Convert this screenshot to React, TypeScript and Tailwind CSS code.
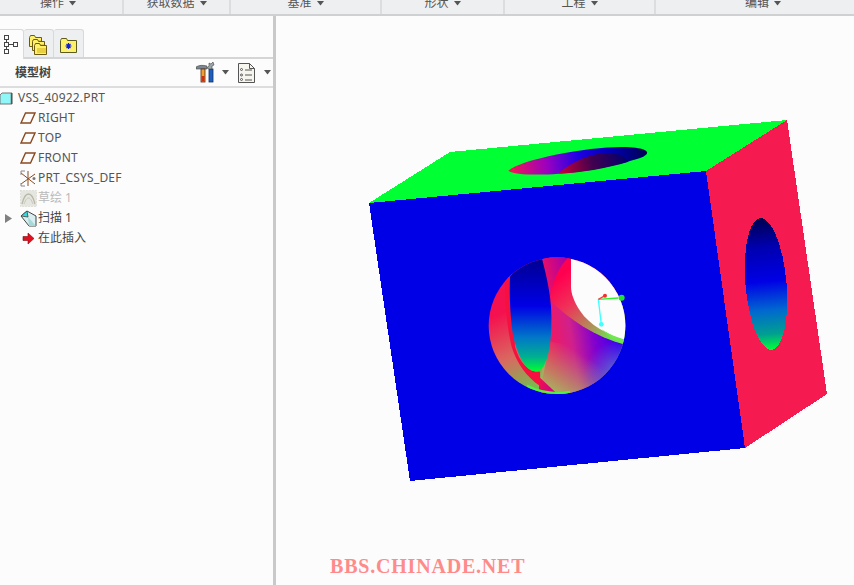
import React from "react";

const menus = [
  { label: "操作", w: "w-[124px] pr-[6px]" },
  { label: "获取数据", w: "w-[107px]" },
  { label: "基准", w: "w-[151px]" },
  { label: "形状", w: "w-[123px]" },
  { label: "工程", w: "w-[151px]" },
  { label: "编辑", w: "flex-1 pl-[16px]" },
];

const Caret = ({ color = "#555" }: { color?: string }) => (
  <svg width="7" height="5" viewBox="0 0 7 5" className="shrink-0">
    <path d="M0 0h7L3.5 4.5z" fill={color} />
  </svg>
);

const PlaneIcon = () => (
  <svg width="16" height="12" viewBox="0 0 16 12" className="-ml-[1px]">
    <path d="M5.500 1h9.500L10.500 11H1z" fill="none" stroke="#8b4a20" strokeWidth="1.400" />
  </svg>
);

const PartIcon = () => (
  <svg width="13" height="13" viewBox="0 0 13 13">
    <path d="M0 3l2-2h10v11H0z" fill="#8ff7f7" stroke="#777" strokeWidth="1" />
    <path d="M11.5 1v11" stroke="#555" strokeWidth="1.5" />
  </svg>
);

const CsysIcon = () => (
  <svg width="17" height="17" viewBox="0 0 17 17" fill="none">
    <path d="M8 1v15M1 3l14 11M1 14l14-10" stroke="#8b4a20" strokeWidth="1" />
    <path d="M1 1l4 0M1 1v4M1 16h4M1 16v-3" stroke="#888" strokeWidth="1" />
    <circle cx="14" cy="8.500" r="1.500" fill="#777" />
  </svg>
);

const SketchIcon = () => (
  <svg width="17" height="17" viewBox="0 0 17 17" fill="none">
    <rect x="0.500" y="0.500" width="16" height="16" fill="#e6e6e0" stroke="#d0d0c8" strokeDasharray="1 2" />
    <path d="M2 14C4 6 7 4 8.500 4S13 6 15 14" stroke="#b8b8a8" strokeWidth="1.300" />
    <path d="M4 14C6 9 7 8 8.500 8S11 9 13 14" stroke="#c8c8bc" strokeWidth="1" />
  </svg>
);

const SweepIcon = () => (
  <svg width="18" height="17" viewBox="0 0 18 17">
    <path d="M1 6l6-5 9 5v10H9z" fill="#d9eef0" stroke="#444" strokeWidth="1" />
    <path d="M1 6l6-5 1 6z" fill="#35d8d8" stroke="#444" strokeWidth="0.800" />
    <path d="M8 7l8 9H9z" fill="#a8d8d8" />
  </svg>
);

const InsertIcon = () => (
  <svg width="13" height="13" viewBox="0 0 13 13">
    <path d="M1 4.500h5V1l6 5.500-6 5.500V8.500H1z" fill="#e01020" stroke="#701010" strokeWidth="0.600" />
  </svg>
);

const TreeTabIcon = () => (
  <svg width="15" height="20" viewBox="0 0 15 20" fill="none" stroke="#444" strokeWidth="1">
    <rect x="0.500" y="0.500" width="4" height="4" />
    <rect x="0.500" y="7.500" width="4" height="4" />
    <rect x="0.500" y="14.500" width="4" height="4" />
    <rect x="9.500" y="7.500" width="4" height="4" />
    <path d="M2.500 5v2M2.500 12v2M5 9.500h4" />
  </svg>
);

const Folder = ({ x, y }: { x: number; y: number }) => (
  <g transform={`translate(${x} ${y})`}>
    <path d="M0.500 2.500l1-2h4l1 2h6v9h-12z" fill="#fff06a" stroke="#6b5a10" strokeWidth="1" />
    <path d="M3 5h9v5H3z" fill="#e8d040" />
  </g>
);

const FoldersTabIcon = () => (
  <svg width="19" height="20" viewBox="0 0 19 20">
    <Folder x={0} y={0} />
    <Folder x={3} y={4} />
    <Folder x={5} y={8} />
  </svg>
);

const StarFolderIcon = () => (
  <svg width="17" height="15" viewBox="0 0 17 15">
    <path d="M0.500 2.500l1-2h5l1 2h9v12h-16z" fill="#fff06a" stroke="#5b5a20" strokeWidth="1" />
    <path d="M8.500 5v6M5.500 8h6M6.500 6l4 4M10.500 6l-4 4" stroke="#1020d0" strokeWidth="1.200" />
  </svg>
);

const ToolsIcon = () => (
  <svg width="20" height="21" viewBox="0 0 20 21">
    <path d="M0 5c3-2 7-2 11-1v3H0z" fill="#7b8790" stroke="#444" strokeWidth="0.600" />
    <rect x="5" y="7" width="4" height="13" fill="#f0a030" stroke="#5a2a10" strokeWidth="0.800" />
    <rect x="5.500" y="14" width="3" height="5.500" fill="#d03010" />
    <rect x="13" y="7" width="4" height="13" fill="#1d5fc0" stroke="#153060" strokeWidth="0.800" />
    <path d="M11 6l2-2V1l2 1 2-2 1 3-2 1v3h-3z" fill="#9aa4aa" stroke="#444" strokeWidth="0.600" />
  </svg>
);

const ListDocIcon = () => (
  <svg width="17" height="20" viewBox="0 0 17 20" fill="none" stroke="#555" strokeWidth="1">
    <path d="M0.500 0.500h11l5 5v14H0.500z" fill="#f6f5ee" />
    <path d="M11.500 0.500v5h5" />
    <path d="M7 7h7M7 12h7M7 17h7" />
    <circle cx="3.500" cy="6.500" r="1" />
    <circle cx="3.500" cy="12" r="1" />
    <circle cx="3.500" cy="16.500" r="1" />
  </svg>
);

const rows: { icon: React.ReactNode; label: string; color?: string; indent?: boolean; expand?: boolean; latin?: boolean }[] = [
  { icon: <PartIcon />, label: "VSS_40922.PRT", latin: true },
  { icon: <PlaneIcon />, label: "RIGHT", indent: true, latin: true },
  { icon: <PlaneIcon />, label: "TOP", indent: true, latin: true },
  { icon: <PlaneIcon />, label: "FRONT", indent: true, latin: true },
  { icon: <CsysIcon />, label: "PRT_CSYS_DEF", indent: true, latin: true },
  { icon: <SketchIcon />, label: "草绘 1", indent: true, color: "text-[#b9b9b9]" },
  { icon: <SweepIcon />, label: "扫描 1", indent: true, expand: true, color: "text-[#444]" },
  { icon: <InsertIcon />, label: "在此插入", indent: true, color: "text-[#444]" },
];

const Model = () => (
  <svg viewBox="276 16 578 569" className="h-[569px] flex-1">
    <defs>
      <linearGradient id="rightHole" gradientUnits="userSpaceOnUse" x1="0" y1="218" x2="0" y2="350">
        <stop offset="0" stopColor="#000050" />
        <stop offset="0.22" stopColor="#0000b0" />
        <stop offset="0.48" stopColor="#0000e6" />
        <stop offset="0.7" stopColor="#0068d0" />
        <stop offset="0.88" stopColor="#00a090" />
        <stop offset="1" stopColor="#00ff38" />
      </linearGradient>
      <linearGradient id="topHole" gradientUnits="userSpaceOnUse" x1="55" y1="120" x2="473" y2="70">
        <stop offset="0" stopColor="#f5184f" />
        <stop offset="0.28" stopColor="#9a00c0" />
        <stop offset="0.5" stopColor="#2000e6" />
        <stop offset="0.75" stopColor="#0000b0" />
        <stop offset="1" stopColor="#000050" />
      </linearGradient>
      <linearGradient id="topInner" gradientUnits="userSpaceOnUse" x1="205" y1="130" x2="415" y2="75">
        <stop offset="0" stopColor="#d00038" />
        <stop offset="0.5" stopColor="#400050" />
        <stop offset="1" stopColor="#000070" />
      </linearGradient>
      <linearGradient id="sphereLeft" gradientUnits="userSpaceOnUse" x1="90" y1="220" x2="190" y2="450">
        <stop offset="0" stopColor="#f5104f" />
        <stop offset="0.55" stopColor="#d86a60" />
        <stop offset="1" stopColor="#70c050" />
      </linearGradient>
      <linearGradient id="sphereRight" gradientUnits="userSpaceOnUse" x1="235" y1="320" x2="440" y2="290">
        <stop offset="0" stopColor="#f5185a" />
        <stop offset="0.35" stopColor="#d0208c" />
        <stop offset="0.68" stopColor="#8000d0" />
        <stop offset="1" stopColor="#3a00ee" />
      </linearGradient>
      <linearGradient id="sphereBottom" gradientUnits="userSpaceOnUse" x1="340" y1="345" x2="265" y2="465">
        <stop offset="0" stopColor="#b0a868" stopOpacity="0" />
        <stop offset="1" stopColor="#a8b060" stopOpacity="1" />
      </linearGradient>
      <radialGradient id="sphereBlue" gradientUnits="userSpaceOnUse" cx="450" cy="410" r="110">
        <stop offset="0" stopColor="#6a80c8" stopOpacity="1" />
        <stop offset="1" stopColor="#5070d8" stopOpacity="0" />
      </radialGradient>
      <linearGradient id="sphereBand" gradientUnits="userSpaceOnUse" x1="270" y1="110" x2="420" y2="290">
        <stop offset="0" stopColor="#ff0050" />
        <stop offset="0.35" stopColor="#f03058" />
        <stop offset="0.75" stopColor="#b09058" />
        <stop offset="1" stopColor="#70e050" />
      </linearGradient>
      <linearGradient id="sphereHole" gradientUnits="userSpaceOnUse" x1="0" y1="55" x2="0" y2="395">
        <stop offset="0" stopColor="#000090" />
        <stop offset="0.42" stopColor="#0000e6" />
        <stop offset="0.7" stopColor="#0078c8" />
        <stop offset="0.87" stopColor="#00b090" />
        <stop offset="1" stopColor="#00ff30" />
      </linearGradient>
      <linearGradient id="sphereSliver" gradientUnits="userSpaceOnUse" x1="215" y1="100" x2="295" y2="80">
        <stop offset="0" stopColor="#f01060" />
        <stop offset="1" stopColor="#a800a8" />
      </linearGradient>
      <linearGradient id="sphereBottomSliver" gradientUnits="userSpaceOnUse" x1="205" y1="430" x2="265" y2="450">
        <stop offset="0" stopColor="#f01050" />
        <stop offset="1" stopColor="#c00098" />
      </linearGradient>
      <clipPath id="sphere">
        <circle cx="261" cy="257" r="205" />
      </clipPath>
    </defs>

    <g shapeRendering="crispEdges">
      <polygon points="369,203 450,152 787,120 706,171" fill="#00ff33" />
      <polygon points="706,171 787,120 827,394 745,448" fill="#f51a50" />
      <polygon points="369,203 706,171 745,448 410,481" fill="#0000e6" />
      <ellipse cx="766" cy="284" rx="20.500" ry="66" transform="rotate(-5 766 284)" fill="url(#rightHole)" />
    </g>

    {/* hole in the top face, drawn at 3x */}
    <g transform="translate(490 130) scale(0.3333)">
      <path d="M55 122C100 85 320 45 420 52C470 55 485 68 460 80C400 102 300 125 205 131C150 136 70 135 55 122Z" fill="url(#topHole)" />
      <path d="M205 131C250 90 310 68 360 70C395 72 412 85 415 95C350 115 270 128 205 131Z" fill="url(#topInner)" />
    </g>

    {/* hole in the front face, drawn at 3x */}
    <g transform="translate(470 240) scale(0.3333)">
      <g clipPath="url(#sphere)">
        <rect x="50" y="40" width="430" height="440" fill="url(#sphereLeft)" />
        <path d="M240 180C300 240 380 290 475 315V480H205L235 330Z" fill="url(#sphereRight)" />
        <path d="M225 300C300 320 400 330 475 330V480H205Z" fill="url(#sphereBottom)" />
        <path d="M300 270H480V480H300Z" fill="url(#sphereBlue)" />
        <path d="M235 170C245 115 275 75 303 45H480V318C380 295 300 240 240 180Z" fill="url(#sphereBand)" />
        <path d="M303 45H480V303C420 288 360 258 330 212C312 185 303 160 303 140Z" fill="#fcfcfc" />
        <path d="M395 268C420 285 445 296 470 303V314C445 306 420 292 395 268Z" fill="#6fe850" />
        <path d="M212 45H303C270 75 245 120 240 185C232 140 220 90 212 45Z" fill="url(#sphereSliver)" />
        <path d="M105 120L125 90L135 320C150 370 175 395 210 395V438C170 410 140 370 125 320C110 260 105 180 105 120Z" fill="#f5103f" />
        <path d="M120 110C140 85 180 60 215 52C230 110 248 180 244 260C242 340 225 395 198 395C165 395 140 340 128 280C120 220 118 160 120 110Z" fill="url(#sphereHole)" />
        <path d="M207 410L265 465H207Z" fill="url(#sphereBottomSliver)" />
        <path d="M170 440A205 205 0 0 0 300 458" fill="none" stroke="#55f040" strokeWidth="12" />
      </g>
      <path d="M385 178L445 174" stroke="#30f030" strokeWidth="4" />
      <path d="M385 178L394 253" stroke="#40ffff" strokeWidth="4" />
      <path d="M385 178L405 167" stroke="#ff4040" strokeWidth="4" />
      <circle cx="455" cy="173" r="9" fill="#20e030" />
      <circle cx="394" cy="253" r="7" fill="#40ffff" />
      <circle cx="405" cy="167" r="6" fill="#f03030" />
    </g>
  </svg>
);

export default function App() {
  return (
    <div
      className="relative flex h-[585px] w-[854px] flex-col overflow-hidden bg-[#fcfcfc] text-[12px] text-[#555]"
      style={{ fontFamily: '"Noto Sans", "Noto Sans CJK SC", sans-serif' }}
    >
      <div className="flex h-[16px] shrink-0 border-b-2 border-[#cfd0d2] bg-[#eeeff1]">
        {menus.map((m) => (
          <div
            key={m.label}
            className={`${m.w} flex h-[14px] items-start justify-center gap-[5px] overflow-hidden border-r-2 border-[#dcdddf] last:border-r-0`}
          >
            <span className="mt-[-6px] leading-[18px]">{m.label}</span>
            <span className="mt-[1px]">
              <Caret />
            </span>
          </div>
        ))}
      </div>

      <div className="flex min-h-0 flex-1">
        <div className="flex w-[276px] shrink-0 flex-col border-r-[3px] border-[#c8c9cb]">
          <div className="mt-[13px] flex h-[30px] shrink-0 items-stretch border-b-2 border-[#d4d5d7]">
            <div className="relative z-10 mb-[-2px] flex w-[24px] items-start justify-center rounded-tr-[3px] border-r border-t border-[#d8d9db] bg-[#fcfcfc] pt-[5px]">
              <TreeTabIcon />
            </div>
            <div className="flex w-[30px] items-start justify-center rounded-t-[3px] border-r border-t border-[#d8d9db] bg-[#eeeff1] pt-[5px]">
              <FoldersTabIcon />
            </div>
            <div className="flex w-[30px] items-start justify-center rounded-t-[3px] border-r border-t border-[#d8d9db] bg-[#eeeff1] pt-[8px]">
              <StarFolderIcon />
            </div>
          </div>

          <div className="flex h-[29px] shrink-0 items-center border-b-2 border-[#dcdddf] pl-[15px]">
            <span className="font-bold text-[#444]">模型树</span>
            <div className="ml-auto flex items-center">
              <ToolsIcon />
              <span className="ml-[6px]">
                <Caret />
              </span>
              <span className="ml-[9px]">
                <ListDocIcon />
              </span>
              <span className="ml-[9px] mr-[2px]">
                <Caret />
              </span>
            </div>
          </div>

          {rows.map((r) => (
            <div key={r.label} className={`relative flex h-[20px] shrink-0 items-center ${r.indent ? "pl-[19px]" : ""}`}>
              {r.expand && (
                <svg width="7" height="9" viewBox="0 0 7 9" className="absolute left-[5px] top-[6px]">
                  <path d="M0 0l7 4.500L0 9z" fill="#808080" />
                </svg>
              )}
              <span className={`flex items-center justify-center ${r.indent ? "w-[19px]" : "w-[18px] justify-start"}`}>
                {r.icon}
              </span>
              <span className={`${r.color ?? "text-[#555]"} ${r.latin ? "tracking-[0.2px]" : ""} leading-none`}>{r.label}</span>
            </div>
          ))}
        </div>

        <Model />
      </div>

      <div
        className="absolute left-[330px] top-[553px] text-[20px] font-bold leading-[26px] tracking-[0.8px] text-[#ff8a8a]"
        style={{ fontFamily: '"Liberation Serif", serif' }}
      >
        BBS.CHINADE.NET
      </div>
    </div>
  );
}
